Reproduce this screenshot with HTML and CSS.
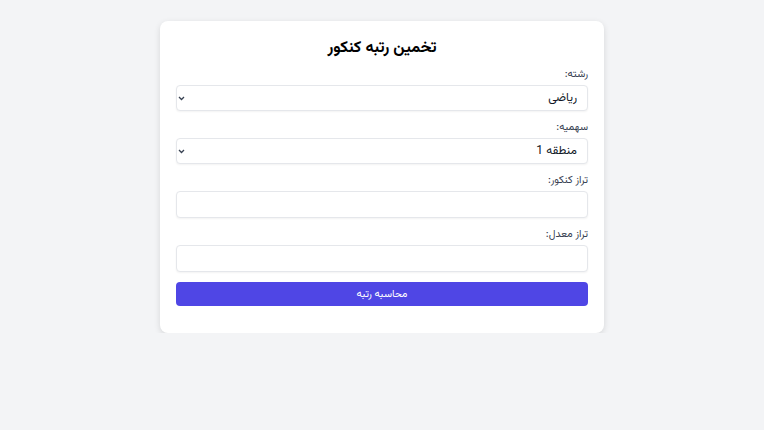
FILE: index.html
```html
<!DOCTYPE html>
<html lang="fa" dir="rtl">
<head>
    <meta charset="UTF-8">
    <meta name="viewport" content="width=device-width, initial-scale=1.0">
    <title>تخمین رتبه کنکور</title>
    <link rel="stylesheet" href="styles.css">
</head>
<body>
    <div class="card">
        <h1>تخمین رتبه کنکور</h1>
        <form id="rank-form">
            <div class="form-group">
                <label for="field">رشته:</label>
                <div class="select-wrap">
                    <select id="field">
                        <option>ریاضی</option>
                        <option>تجربی</option>
                        <option>انسانی</option>
                    </select>
                    <svg class="chevron" width="7" height="5" viewBox="0 0 7 5"><path d="M1 1l2.5 2.5L6 1" fill="none" stroke="#374151" stroke-width="1.3"/></svg>
                </div>
            </div>
            <div class="form-group">
                <label for="quota">سهمیه:</label>
                <div class="select-wrap">
                    <select id="quota">
                        <option>منطقه 1</option>
                        <option>منطقه 2</option>
                        <option>منطقه 3</option>
                    </select>
                    <svg class="chevron" width="7" height="5" viewBox="0 0 7 5"><path d="M1 1l2.5 2.5L6 1" fill="none" stroke="#374151" stroke-width="1.3"/></svg>
                </div>
            </div>
            <div class="form-group">
                <label for="konkur">تراز کنکور:</label>
                <input type="number" id="konkur">
            </div>
            <div class="form-group">
                <label for="gpa">تراز معدل:</label>
                <input type="number" id="gpa">
            </div>
            <button type="submit" class="btn">محاسبه رتبه</button>
        </form>
    </div>
</body>
</html>
```

FILE: styles.css
```css
* {
    margin: 0;
    padding: 0;
    box-sizing: border-box;
    font-family: 'Vazirmatn', 'DejaVu Sans', 'Noto Sans', sans-serif;
}

body {
    background-color: #f3f4f6;
    color: #111827;
    display: flex;
    justify-content: center;
    padding-top: 21px;
}

.card {
    width: 444px;
    background: #ffffff;
    border-radius: 8px;
    padding: 16px 16px 27px;
    box-shadow: 0 2px 6px rgba(0, 0, 0, 0.12);
}

h1 {
    text-align: center;
    font-size: 16px;
    line-height: 24px;
    font-weight: bold;
    color: #000;
    margin-bottom: 7px;
}

.form-group {
    margin-bottom: 10px;
}

label {
    display: block;
    font-size: 10.5px;
    line-height: 14px;
    color: #374151;
    margin-bottom: 3px;
}

select, input {
    width: 100%;
    height: 26px;
    border: 1px solid #e5e7eb;
    border-radius: 4px;
    background: #fff;
    box-shadow: 0 1px 2px rgba(0, 0, 0, 0.05);
    font-size: 12px;
    color: #111827;
    padding: 0 10px;
    outline: none;
}

input {
    height: 27px;
}

select {
    appearance: none;
    -webkit-appearance: none;
}

.select-wrap {
    position: relative;
}

.chevron {
    position: absolute;
    left: 2px;
    top: 11px;
    pointer-events: none;
}

.btn {
    display: block;
    width: 100%;
    height: 24px;
    background: #4f46e5;
    border: none;
    border-radius: 4px;
    color: #fff;
    font-size: 10.5px;
    cursor: pointer;
}
```
